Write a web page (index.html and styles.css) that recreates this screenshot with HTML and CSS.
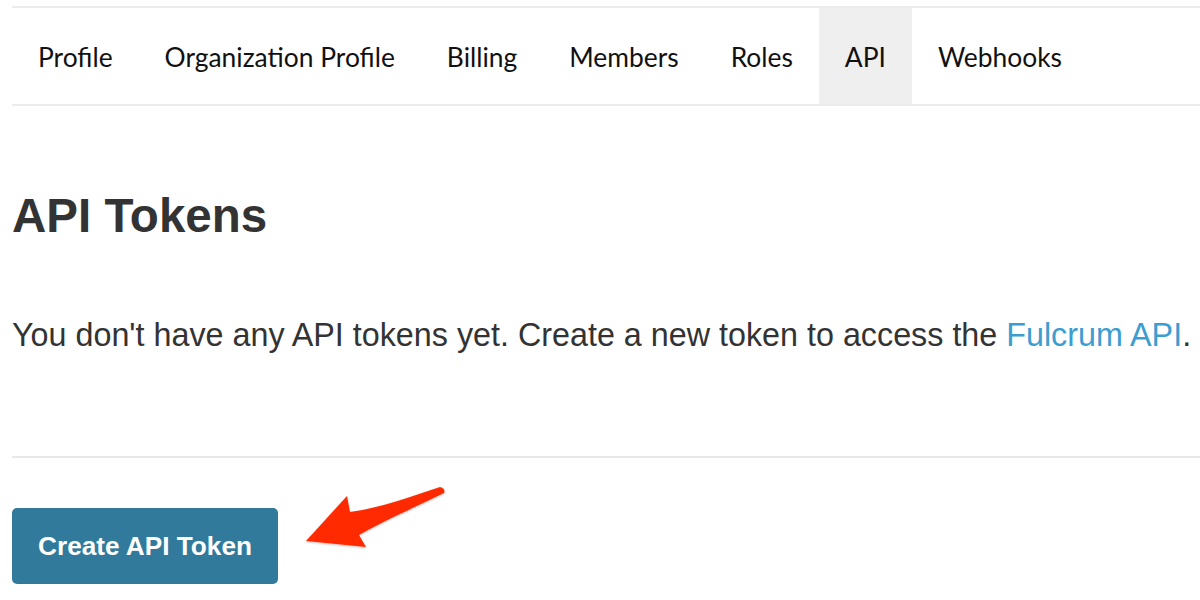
FILE: index.html
```html
<!DOCTYPE html>
<html>
<head>
<meta charset="utf-8">
<link rel="stylesheet" href="styles.css">
</head>
<body>
<div class="page">
  <nav class="tabs">
    <a class="tab">Profile</a>
    <a class="tab">Organization Profile</a>
    <a class="tab">Billing</a>
    <a class="tab">Members</a>
    <a class="tab">Roles</a>
    <a class="tab active">API</a>
    <a class="tab">Webhooks</a>
  </nav>
  <h1 class="title">API Tokens</h1>
  <p class="intro">You don't have any API tokens yet. Create a new token to access the <a class="link">Fulcrum API</a>.</p>
  <hr class="divider">
  <button class="btn">Create API Token</button>
</div>
<svg class="arrow" width="1200" height="600" viewBox="0 0 1200 600">
  <defs>
    <filter id="sh" x="-20%" y="-20%" width="140%" height="140%">
      <feDropShadow dx="0" dy="1" stdDeviation="1.2" flood-color="#000" flood-opacity="0.25"/>
    </filter>
  </defs>
  <path d="M306 541 L347 496 L350 512 C380 508 410 497 440 487 Q446 489 444 493 C418 506 385 520 359 535 L366 547 Z" fill="#ff2a00" filter="url(#sh)"/>
</svg>
</body>
</html>
```

FILE: styles.css
```css
html, body {
  margin: 0;
  padding: 0;
  background: #fff;
}
.page {
  padding: 6px 0 0 12px;
}
.tabs {
  display: flex;
  border-top: 2px solid #ececec;
  border-bottom: 2px solid #ececec;
  height: 96px;
}
.tab {
  display: flex;
  align-items: center;
  padding: 2px 26px 0 26px;
  font-family: Lato, "Liberation Sans", sans-serif;
  font-size: 26.4px;
  color: #111;
}
.tab.active {
  background: #efefef;
}
.title {
  margin: 84px 0 0 0;
  font-family: "Liberation Sans", Arial, sans-serif;
  font-weight: bold;
  font-size: 47.5px;
  line-height: 52px;
  color: #333;
}
.intro {
  margin: 73px 0 0 0;
  font-family: "Liberation Sans", Arial, sans-serif;
  font-size: 32.3px;
  line-height: 40px;
  color: #333;
  white-space: nowrap;
}
.link {
  color: #3c9dd0;
}
.divider {
  margin: 101px 0 0 0;
  border: 0;
  border-top: 2px solid #e8e8e8;
  height: 0;
}
.btn {
  margin-top: 50px;
  width: 266px;
  height: 76px;
  border: 0;
  border-radius: 5px;
  background: #317a9b;
  color: #fff;
  font-family: "Liberation Sans", Arial, sans-serif;
  font-weight: bold;
  font-size: 26.2px;
  padding: 0;
}
.arrow {
  position: absolute;
  left: 0;
  top: 0;
  pointer-events: none;
}
```
